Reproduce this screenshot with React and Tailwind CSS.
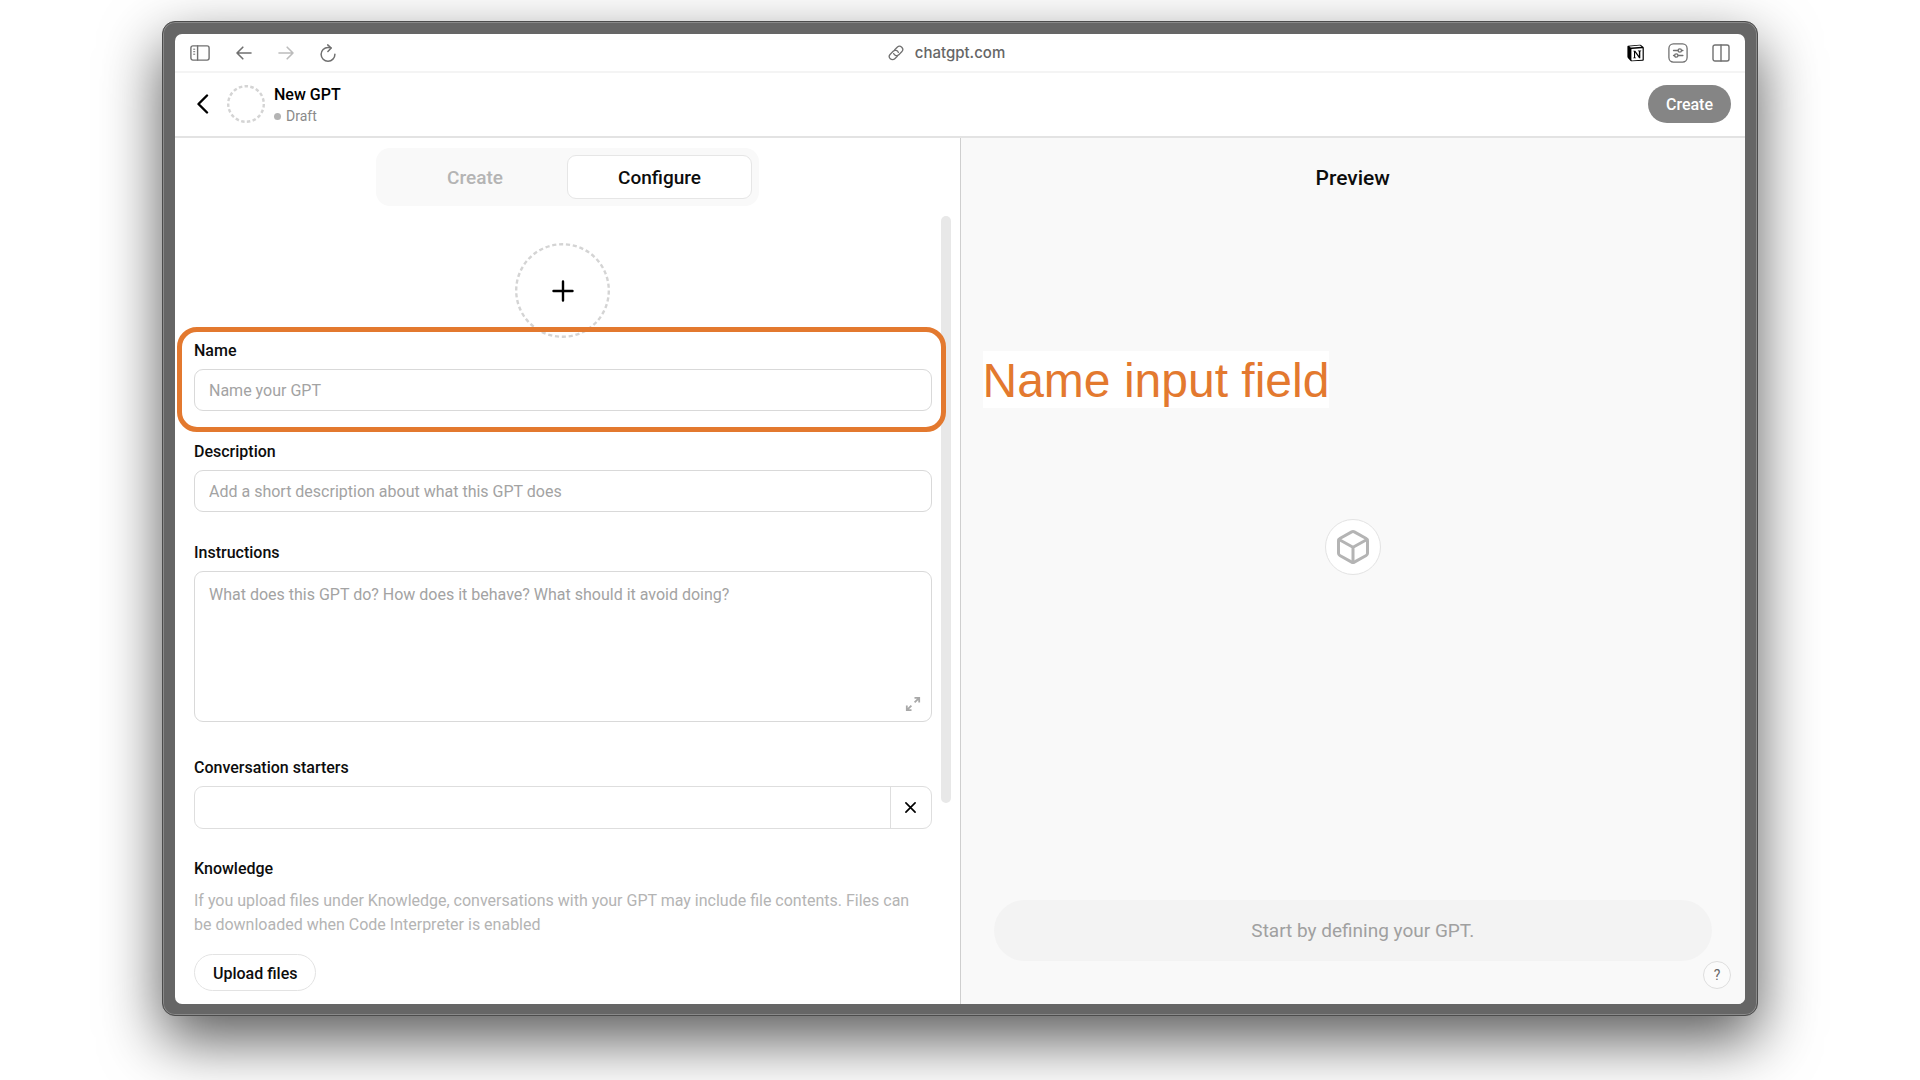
import React from "react";

function DashedCircle({ size, count }) {
  return (
    <svg width={size} height={size} viewBox={`0 0 ${size} ${size}`} fill="none" aria-hidden="true">
      <circle
        cx={size / 2}
        cy={size / 2}
        r={size / 2 - 1.2}
        stroke="#d4d4d4"
        strokeWidth="2.4"
        pathLength={count * 10}
        strokeDasharray="6 4"
      />
    </svg>
  );
}

const iconProps = {
  fill: "none",
  stroke: "currentColor",
  strokeLinecap: "round",
  strokeLinejoin: "round",
  "aria-hidden": true,
};

function SidebarIcon() {
  return (
    <svg width="20" height="16" viewBox="0 0 20 16" strokeWidth="1.4" {...iconProps}>
      <rect x="0.9" y="0.9" width="18.2" height="14.2" rx="2" />
      <path d="M7.6 1v14" />
      <path d="M3.6 4.2h1.2M3.6 6.7h1.2M3.6 9.2h1.2" strokeWidth="1" />
    </svg>
  );
}

function ArrowIcon({ flip }) {
  return (
    <svg width="16" height="14" viewBox="0 0 16 14" strokeWidth="1.6" {...iconProps}>
      {flip ? (
        <path d="M1 7h14M9.2 1.2 15 7l-5.8 5.8" />
      ) : (
        <path d="M15 7H1M6.8 1.2 1 7l5.8 5.8" />
      )}
    </svg>
  );
}

function ReloadIcon() {
  return (
    <svg width="16" height="18" viewBox="0 0 16 18" strokeWidth="1.5" {...iconProps}>
      <path d="M14.9 10.2A6.9 6.9 0 1 1 8 3.4c1 0 2 .1 2.9.5" />
      <path d="M7.7.9 11.2 4 7.9 7.4" />
    </svg>
  );
}

function LinkIcon() {
  return (
    <svg width="16" height="16" viewBox="0 0 16 16" strokeWidth="1.3" {...iconProps}>
      <g transform="rotate(-45 8 8)">
        <path d="M6.6 11.2H3.1a3.2 3.2 0 0 1 0-6.4h4.1a3.2 3.2 0 0 1 2.9 4.5" />
        <path d="M9.4 4.8h3.5a3.2 3.2 0 0 1 0 6.4H8.8a3.2 3.2 0 0 1-2.9-4.5" />
      </g>
    </svg>
  );
}

function NotionIcon() {
  return (
    <svg width="17" height="18" viewBox="0 0 17 18" aria-hidden="true">
      <path
        d="M1 1.8 12.6.7c.6 0 1 .1 1.4.4l2.2 1.6c.4.3.6.6.6 1.1v11.6c0 .8-.4 1.2-1.1 1.3l-10.9.6c-.6 0-1-.1-1.4-.6L.9 13.9c-.3-.4-.5-.8-.5-1.3V2.8c0-.6.2-.9.6-1Z"
        fill="#000"
      />
      <path d="M2.3 2.4 12.4 1.6c.4 0 .6 0 .9.2l1.3 1-9.9.8c-.5 0-.7 0-1-.2Z" fill="#fff" />
      <path d="m4.7 5 10.4-.7c.4 0 .5.1.5.5v10.4c0 .4-.2.5-.5.6l-10 .6c-.5 0-.7-.2-.7-.6V5.5c0-.3.1-.5.3-.5Z" fill="#fff" />
      <path d="M6.3 6.7h2l3.6 5.100V7.400l-1-.3v-.5h3.300v.5l-.9.3v6.900h-1.200L8.100 8.600v4.900l1 .3v.5H6.100v-.5l.9-.3V7.500l-.7-.3Z" fill="#000" />
    </svg>
  );
}

function SlidersIcon() {
  return (
    <svg width="20" height="20" viewBox="0 0 20 20" strokeWidth="1.3" {...iconProps}>
      <rect x="0.9" y="0.9" width="18.2" height="18.2" rx="4.5" />
      <path d="M5.5 7.500h4.300M13.700 7.500h1.200M5.500 12.500h1M10.300 12.500h4.600" />
      <circle cx="11.8" cy="7.5" r="1.7" />
      <circle cx="8.3" cy="12.5" r="1.7" />
    </svg>
  );
}

function SplitIcon() {
  return (
    <svg width="18" height="18" viewBox="0 0 18 18" strokeWidth="1.4" {...iconProps}>
      <rect x="1" y="1" width="16" height="16" rx="2" />
      <path d="M9 1v16" />
    </svg>
  );
}

function ChevronIcon() {
  return (
    <svg width="12" height="20" viewBox="0 0 12 20" strokeWidth="2.4" {...iconProps}>
      <path d="M10 1.500 1.500 10 10 18.500" />
    </svg>
  );
}

function PlusIcon() {
  return (
    <svg width="22" height="22" viewBox="0 0 22 22" strokeWidth="2.4" {...iconProps}>
      <path d="M11 1.500v19M1.500 11h19" />
    </svg>
  );
}

function CloseIcon() {
  return (
    <svg width="11" height="11" viewBox="0 0 12 12" strokeWidth="1.8" {...iconProps}>
      <path d="m1 1 10 10M11 1 1 11" />
    </svg>
  );
}

function ExpandIcon() {
  return (
    <svg width="16" height="16" viewBox="0 0 16 16" strokeWidth="1.8" {...iconProps} strokeLinecap="butt" strokeLinejoin="miter">
      <path d="M9.500 1.800h4.700v4.700M14.200 1.800 9.600 6.400" />
      <path d="M6.500 14.200H1.800V9.500M1.800 14.200l4.600-4.600" />
    </svg>
  );
}

function CubeIcon() {
  return (
    <svg width="32" height="34" viewBox="0 0 32 34" strokeWidth="3" {...iconProps}>
      <path d="M14.700 1.900a2.600 2.600 0 0 1 2.600 0l11.900 6.600a2.500 2.500 0 0 1 1.300 2.200v12.600a2.500 2.500 0 0 1-1.300 2.200l-11.900 6.600a2.600 2.600 0 0 1-2.600 0L2.800 25.500a2.500 2.500 0 0 1-1.300-2.200V10.700a2.500 2.500 0 0 1 1.300-2.200Z" />
      <path d="M2 9.500 16 17.300l14-7.800M16 17.300V32" />
    </svg>
  );
}

const labelClass = "mb-1.5 block h-6 text-base leading-6 font-medium text-[#0d0d0d]";
const fieldClass =
  "block w-full rounded-[9px] border border-[#d9d9d9] bg-white px-3.5 text-base text-[#0d0d0d] outline-none placeholder:text-[#a3a3a3]";

function BrowserBar() {
  return (
    <div className="grid h-[39px] shrink-0 grid-cols-3 items-center border-b-2 border-[#f4f4f4] px-[15px] text-[#707070]">
      <div className="flex items-center gap-[26px]">
        <button type="button" aria-label="Show sidebar"><SidebarIcon /></button>
        <button type="button" aria-label="Back"><ArrowIcon /></button>
        <button type="button" aria-label="Forward" className="text-[#bcbcbc]"><ArrowIcon flip /></button>
        <button type="button" aria-label="Reload"><ReloadIcon /></button>
      </div>
      <div className="flex items-center justify-center gap-[11px] pr-[27px]">
        <LinkIcon />
        <span className="text-[15px] leading-5 font-medium text-[#666] font-['Inter',sans-serif]">chatgpt.com</span>
      </div>
      <div className="flex items-center justify-end gap-6">
        <button type="button" aria-label="Notion"><NotionIcon /></button>
        <button type="button" aria-label="Page settings"><SlidersIcon /></button>
        <button type="button" aria-label="Split view"><SplitIcon /></button>
      </div>
    </div>
  );
}

function Header() {
  return (
    <header className="flex h-[65px] shrink-0 items-center border-b-2 border-[#e3e3e3] pr-3.5 pb-px pl-[22px]">
      <button type="button" aria-label="Go back"><ChevronIcon /></button>
      <div className="ml-[18px]"><DashedCircle size={38} count={19} /></div>
      <div className="ml-[9px] pt-0.5">
        <h1 className="text-base leading-[22px] font-medium text-black">New GPT</h1>
        <p className="flex items-center gap-[5px] text-sm leading-5 text-[#8a8a8a]">
          <span className="size-[7px] rounded-full bg-[#b4b4b4]" />
          Draft
        </p>
      </div>
      <button type="button" className="ml-auto h-[38px] rounded-full bg-[#858585] px-[18px] pt-0.5 text-base font-medium text-white">
        Create
      </button>
    </header>
  );
}

function ConfigureForm() {
  return (
    <form className="flex-1 pt-[37px] pb-[13px] pl-[19px]">
      <button type="button" aria-label="Add picture" className="mx-auto grid size-[95px] place-items-center text-black">
        <span className="col-start-1 row-start-1"><DashedCircle size={95} count={42} /></span>
        <span className="col-start-1 row-start-1"><PlusIcon /></span>
      </button>

      <div className="relative mt-px">
        <label htmlFor="name" className={labelClass}>Name</label>
        <input id="name" type="text" placeholder="Name your GPT" className={`${fieldClass} h-[42px]`} />
        <div className="pointer-events-none absolute -top-3 -right-3.5 -bottom-[21px] -left-[17px] rounded-[20px] border-5 border-[#e3792f]" />
      </div>

      <div className="mt-[29px]">
        <label htmlFor="description" className={labelClass}>Description</label>
        <input id="description" type="text" placeholder="Add a short description about what this GPT does" className={`${fieldClass} h-[42px]`} />
      </div>

      <div className="mt-[29px]">
        <label htmlFor="instructions" className={labelClass}>Instructions</label>
        <div className="relative">
          <textarea
            id="instructions"
            placeholder="What does this GPT do? How does it behave? What should it avoid doing?"
            className={`${fieldClass} h-[151px] resize-none pt-[11px] leading-6`}
          />
          <button type="button" aria-label="Expand instructions" className="absolute right-[11px] bottom-2.5 text-[#a8a8a8]">
            <ExpandIcon />
          </button>
        </div>
      </div>

      <div className="mt-[34px]">
        <label htmlFor="starter" className={labelClass}>Conversation starters</label>
        <div className="flex h-[43px] rounded-[9px] border border-[#dedede]">
          <input id="starter" type="text" className="min-w-0 flex-1 rounded-l-[9px] px-3.5 text-base outline-none" />
          <button type="button" aria-label="Remove starter" className="grid w-[41px] place-items-center border-l border-[#dedede] text-black">
            <CloseIcon />
          </button>
        </div>
      </div>

      <section className="mt-7">
        <h2 className="text-base leading-6 font-medium text-[#0d0d0d]">Knowledge</h2>
        <p className="mt-2 pr-2 text-base leading-6 text-[#b4b4b4]">
          If you upload files under Knowledge, conversations with your GPT may include file contents. Files can be downloaded when Code Interpreter is enabled
        </p>
        <button type="button" className="mt-[17px] h-[37px] rounded-full border border-[#e3e3e3] px-[18px] pt-0.5 text-base font-medium text-[#0d0d0d]">
          Upload files
        </button>
      </section>
    </form>
  );
}

function Preview() {
  return (
    <section className="relative flex flex-1 flex-col bg-[#f9f9f9]">
      <h2 className="h-14 pt-7 text-center text-[21px] leading-6 font-medium text-[#0d0d0d]">Preview</h2>
      <div className="grid flex-1 place-items-center">
        <div className="grid size-14 place-items-center rounded-full border border-[#e3e3e3] bg-white text-[#b4b4b4]">
          <CubeIcon />
        </div>
      </div>
      <div className="mx-[33px] flex h-[61px] items-center justify-center rounded-full bg-[#f3f3f3] pt-0.5 pl-5 text-[19px] text-[#a0a0a0]">
        Start by defining your GPT.
      </div>
      <button type="button" aria-label="Help" className="mr-3.5 mb-[15px] size-7 self-end rounded-full border border-[#dedede] bg-[#fbfbfb] text-sm text-[#666]">
        ?
      </button>
      <p className="absolute top-[213px] left-[22px] bg-white pt-0.5 text-5xl leading-[55px] whitespace-nowrap text-[#e3792f] font-['Liberation_Sans',Arial,sans-serif]">
        Name input field
      </p>
    </section>
  );
}

export default function App() {
  return (
    <div className="flex min-h-screen flex-col overflow-hidden bg-white px-[162px] pt-[21px] pb-16 font-['Roboto',sans-serif]">
      <div className="flex flex-1 flex-col rounded-[13px] border border-[#4c4c4c] bg-[#666] px-3 pt-3 pb-[11px] shadow-[inset_0_0_0_1px_#8a8a8a,0_24px_60px_rgba(0,0,0,0.65)]">
        <div className="flex flex-1 flex-col overflow-hidden rounded-[7px] bg-white">
          <BrowserBar />
          <Header />
          <main className="flex flex-1">
            <section className="flex flex-1 flex-col border-r border-[#cfcfcf]">
              <div className="mx-auto mt-2.5 grid h-[58px] w-[383px] grid-cols-2 rounded-[14px] bg-[#f9f9f9] p-[7px] text-[19px] font-medium" role="tablist">
                <button type="button" role="tab" aria-selected="false" className="pt-0.5 text-[#b4b4b4]">Create</button>
                <button type="button" role="tab" aria-selected="true" className="rounded-[9px] border border-[#e6e6e6] bg-white pt-0.5 text-[#0d0d0d]">Configure</button>
              </div>
              <div className="flex flex-1">
                <ConfigureForm />
                <div className="mt-2.5 mr-[9px] ml-[9px] h-[587px] w-2.5 rounded-full bg-[#e8e8e8]" />
              </div>
            </section>
            <Preview />
          </main>
        </div>
      </div>
    </div>
  );
}
